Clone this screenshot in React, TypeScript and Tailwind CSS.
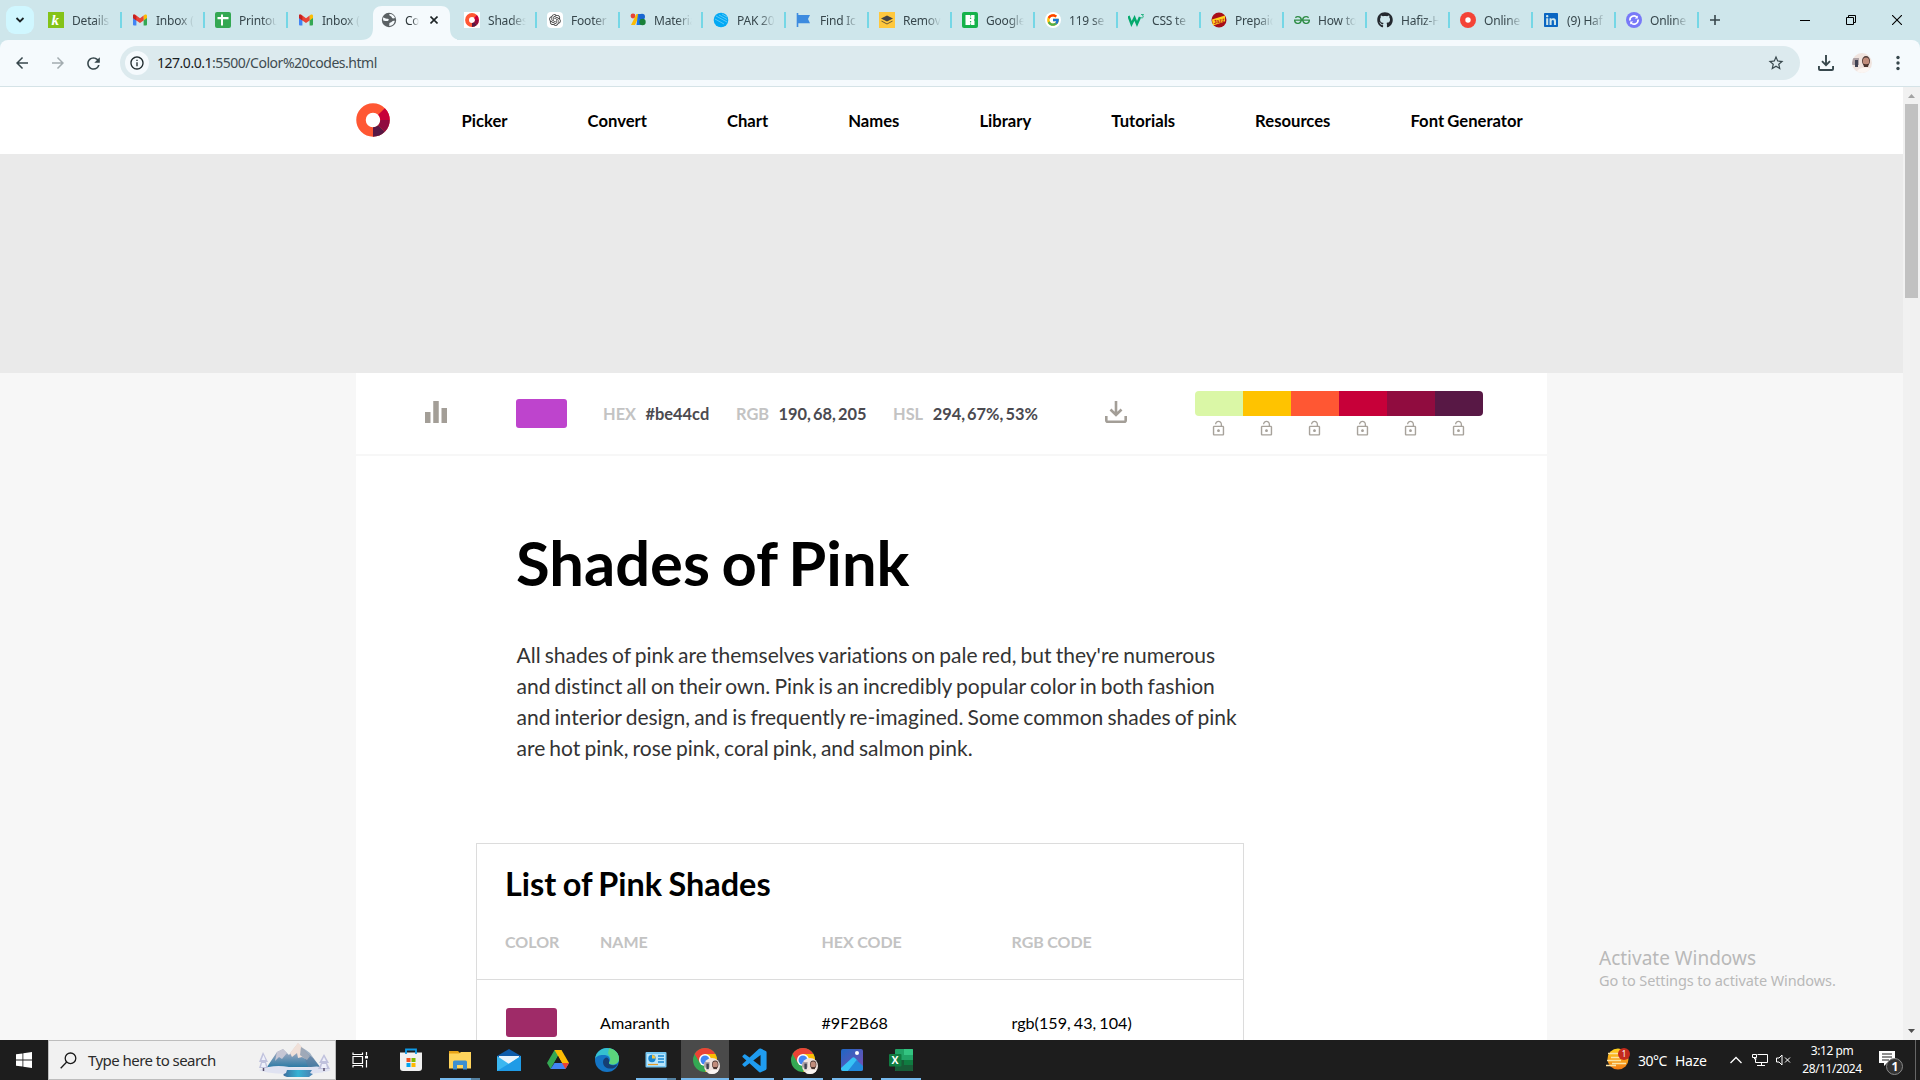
import React from "react";
import { FcGoogle } from "react-icons/fc";
import { SiGeeksforgeeks } from "react-icons/si";
import { RiOpenaiFill } from "react-icons/ri";
import { FaGithub, FaLinkedin } from "react-icons/fa";
import { BiLogoVisualStudio } from "react-icons/bi";
import { MdLockOpen, MdStarBorder, MdInfoOutline, MdArrowBack, MdArrowForward, MdRefresh } from "react-icons/md";

function Gmail() {
  return (
    <svg viewBox="0 0 16 16" className="h-4 w-4">
      <path d="M1 4v8.500a1 1 0 0 0 1 1h2.400V6.500z" fill="#4285f4" />
      <path d="M15 4v8.500a1 1 0 0 1-1 1h-2.400V6.500z" fill="#34a853" />
      <path d="M11.600 3.500 13 2.600c1-.6 2 .1 2 1.200V6l-3.400 2.500z" fill="#fbbc04" />
      <path d="M1 6V3.800c0-1.100 1-1.800 2-1.200l5 3.700 3.600-2.800v5L8 11 4.400 8.500z" fill="#ea4335" />
      <path d="M1 6V3.800C1 3 1.500 2.500 2.200 2.500L4.400 4v4.500z" fill="#c5221f" />
    </svg>
  );
}

function Ring({ className }: { className: string }) {
  return (
    <svg viewBox="0 0 34 34" className={className}>
      <circle cx="17" cy="17" r="12" fill="none" stroke="#ff5733" strokeWidth="9.500" />
      <g fill="none" strokeWidth="9.500">
        <path d="M25.500 8.500A12 12 0 0 1 29 17" stroke="#c70039" />
        <path d="M29 17A12 12 0 0 1 25.500 25.500" stroke="#900c3f" />
        <path d="M25.500 25.500A12 12 0 0 1 17 29" stroke="#581845" />
      </g>
    </svg>
  );
}

const svg16 = (children: React.ReactNode) => (
  <svg viewBox="0 0 16 16" className="h-4 w-4">{children}</svg>
);

const globe = svg16(
  <>
    <circle cx="8" cy="8" r="7.200" fill="#5b6164" />
    <path d="M2 5.500c2 .2 2.500 1.500 4.500 1.200 1.600-.2 1.500 1.300.6 2-1 .8-2.600.2-4.900-.3zM8.500 2c-.8 1 .2 1.900 1.300 2.200 1.300.3.700 2 2.200 2.200 1 .1 1.800-.4 2-.4-.6-2.300-2.700-4.200-5.500-4zM13.800 8.800c-1.600 0-2.300.2-3 1-.8.900-2 .5-2.400 1.500-.3.900.3 1.700-.3 2.700 3 .2 5.300-2 5.700-5.200z" fill="#f5fafd" />
  </>
);

interface TabData { title: string; icon: React.ReactNode; active?: boolean; sep?: boolean }

const tabs: TabData[] = [
  { title: "Details", icon: svg16(<><rect width="16" height="16" fill="#84c318" /><text x="3.500" y="13" fontSize="15" fontStyle="italic" fontWeight="bold" fontFamily="Liberation Serif, serif" fill="#fff">k</text></>) },
  { title: "Inbox (", icon: <Gmail />, sep: true },
  { title: "Printou", icon: svg16(<><rect width="16" height="16" rx="2" fill="#34a853" /><path d="M6 2.500h2v11H6zM2.500 5h11v2.200h-11z" fill="#fff" /></>), sep: true },
  { title: "Inbox (", icon: <Gmail />, sep: true },
  { title: "Co", icon: globe, active: true },
  { title: "Shades", icon: <div className="bg-white"><Ring className="h-4 w-4 p-px" /></div> },
  { title: "Footer", icon: <div className="flex h-4 w-4 items-center justify-center rounded-sm bg-white"><RiOpenaiFill size={14} color="#333" /></div>, sep: true },
  { title: "Materia", icon: svg16(<><circle cx="3" cy="4" r="2.400" fill="#ea4335" /><path d="M6.500 2H10L5 13H1z" fill="#fbbc04" /><path d="M8 2h3v11H6.500z" fill="#1a73e8" /><circle cx="12" cy="4.800" r="3" fill="#1967d2" /><circle cx="12.500" cy="10" r="3.200" fill="#188038" /></>), sep: true },
  { title: "PAK 20", icon: svg16(<><circle cx="8" cy="8" r="7.300" fill="#03a9f4" /><path d="m3 4 11 6M6 3l8 4.500M9 2l5 3M2 7l9 5" stroke="#6fd0fa" strokeWidth=".8" /></>), sep: true },
  { title: "Find Ic", icon: svg16(<><path d="M1.500 1v14" stroke="#3d8bdf" strokeWidth="1.600" /><path d="M1.500 3H14l-2 4 2 4.200H1.500z" fill="#3d8bdf" /></>), sep: true },
  { title: "Remov", icon: svg16(<><rect width="16" height="16" fill="#ffc83d" /><path d="m8 3.500 6 3-6 3-6-3z" fill="#454545" /><path d="m2.500 8.500 5.500 3 5.500-3v1L8 12.500l-5.500-3z" fill="#6b5a35" /></>), sep: true },
  { title: "Google", icon: svg16(<><rect width="16" height="16" rx="2" fill="#16b24b" /><path d="M3.500 3h9v4l-.7 1 .7 1v4h-9z" fill="#fff" /><path d="M8.600 3v1.500M8.600 11.500V13" stroke="#16b24b" strokeWidth=".8" /><circle cx="8.600" cy="6.300" r=".7" fill="#16b24b" /><circle cx="8.600" cy="9.700" r=".7" fill="#16b24b" /></>), sep: true },
  { title: "119 se", icon: <div className="flex h-4 w-4 items-center justify-center rounded-full bg-white"><FcGoogle size={14} /></div>, sep: true },
  { title: "CSS te", icon: svg16(<><path d="m.5 4 3 8 3-6 2.500 6 3-7" fill="none" stroke="#04aa6d" strokeWidth="2.400" /><path d="M13 2.500h2.500L14.500 4c1.500.3 1 2.300-1.500 1.800" fill="none" stroke="#04aa6d" strokeWidth=".8" /></>), sep: true },
  { title: "Prepaid", icon: svg16(<><circle cx="8" cy="8" r="7.500" fill="#a80f19" /><path d="m1 7.500 13-4v6L2 13.500z" fill="#ffd21c" /><text x="2" y="11" fontSize="5.500" fontWeight="bold" fontStyle="italic" transform="rotate(-14 7 9)" fontFamily="Liberation Sans, sans-serif" fill="#b7121c">Jazz</text></>), sep: true },
  { title: "How to", icon: <SiGeeksforgeeks size={16} color="#2f8d46" />, sep: true },
  { title: "Hafiz-H", icon: <FaGithub size={16} color="#24292f" />, sep: true },
  { title: "Online", icon: svg16(<><circle cx="8" cy="8" r="8" fill="#f44336" /><circle cx="8" cy="8" r="2.700" fill="#fff" /></>), sep: true },
  { title: "(9) Haf", icon: <FaLinkedin size={16} color="#0a66c2" />, sep: true },
  { title: "Online", icon: svg16(<><circle cx="8" cy="8" r="8" fill="#7879f8" /><path d="M4 8.500A4 4 0 0 1 11 5.300M12 7.500a4 4 0 0 1-7 3.200" fill="none" stroke="#fff" strokeWidth="1.700" /><path d="M11.800 3.500v3h-3zM4.200 12.500v-3h3z" fill="#fff" /></>), sep: true },
];

function Tab({ t, first }: { t: TabData; first: boolean }) {
  if (t.active) {
    return (
      <div className="relative h-10 w-[83px] shrink-0">
        <svg viewBox="0 0 97 34" className="absolute -left-[9px] top-[6px] h-[34px] w-[97px]">
          <path d="M1 34c8 0 12-4 12-12V9c0-6 4-9 9-9h59c5 0 9 3 9 9v13c0 8 4 12 12 12z" fill="#f5fafd" />
        </svg>
        <div className="relative flex h-10 items-center pl-3">
          {t.icon}
          <span className="ml-2 w-[14px] whitespace-nowrap pt-px text-[12px] tracking-[-0.3px] text-[#2d3639] [mask-image:linear-gradient(to_right,black_50%,transparent)]">{t.title}</span>
          <svg viewBox="0 0 8 8" className="ml-[11px] h-2 w-2"><path d="m.5.5 7 7m0-7-7 7" stroke="#1d2426" strokeWidth="1.600" /></svg>
        </div>
      </div>
    );
  }
  return (
    <div className={first ? "flex h-10 w-[84px] shrink-0 items-center" : "flex h-10 w-[83px] shrink-0 items-center"}>
      <div className={t.sep ? "h-4 w-0.5 shrink-0 bg-[#75d7e6]" : "h-4 w-0.5 shrink-0"} />
      <div className="ml-2.5 h-4 w-4 shrink-0">{t.icon}</div>
      <span className="ml-2 w-[38px] whitespace-nowrap pt-[2px] text-[12px] tracking-[-0.2px] text-[#37474c] [mask-image:linear-gradient(to_right,black_60%,transparent)]">{t.title}</span>
    </div>
  );
}

function Avatar({ className }: { className: string }) {
  return (
    <svg viewBox="0 0 20 20" className={className}>
      <defs><clipPath id="av"><circle cx="10" cy="10" r="10" /></clipPath></defs>
      <g clipPath="url(#av)">
        <rect width="20" height="20" fill="#f0e4df" />
        <rect y="5" width="7" height="7" fill="#b0a3a6" />
        <rect x="3" y="7" width="3" height="7" fill="#3f4152" />
        <ellipse cx="14" cy="8" rx="4" ry="5" fill="#4f3a35" />
        <ellipse cx="14" cy="8.500" rx="3.200" ry="4" fill="#c08c7b" />
        <path d="M11 10.500c1.500 1 4.500 1 6 0l-1 3.500h-4z" fill="#4a342e" />
        <path d="M4 20c1-6 15-8 16-2v2z" fill="#fbf6f3" />
      </g>
    </svg>
  );
}

function DownloadIcon({ className, color }: { className: string; color: string }) {
  return (
    <svg viewBox="0 0 22 22" className={className} fill="none" stroke={color} strokeWidth="2.600">
      <path d="M11 0v14M5.500 8.500 11 14l5.500-5.500M1.300 15v4.200c0 .9.600 1.500 1.500 1.500h16.400c.9 0 1.500-.6 1.500-1.500V15" />
    </svg>
  );
}

function Browser() {
  return (
    <div className="font-['Noto_Sans',sans-serif]">
      <div className="flex h-10 items-center bg-[#cee6eb]">
        <div className="ml-1.5 flex h-7 w-7 shrink-0 items-center justify-center rounded-[9px] bg-[#d0f7ff]">
          <svg viewBox="0 0 10 10" className="h-2.5 w-2.5"><path d="m1.500 3 3.500 3.500L8.500 3" fill="none" stroke="#1c2527" strokeWidth="1.800" /></svg>
        </div>
        <div className="ml-0.5 flex">
          {tabs.map((t, i) => <Tab key={i} t={t} first={i === 0} />)}
        </div>
        <div className="h-4 w-0.5 bg-[#75d7e6]" />
        <svg viewBox="0 0 10 10" className="ml-[11px] h-2.5 w-2.5"><path d="M5 0v10M0 5h10" stroke="#37474c" strokeWidth="1.600" /></svg>
        <div className="ml-auto flex items-center gap-9 pr-[18px]">
          <svg viewBox="0 0 10 10" className="h-2.5 w-2.5"><path d="M0 5.500h10" stroke="#000" /></svg>
          <svg viewBox="0 0 10 10" className="h-2.5 w-2.5"><path d="M.5 2.500h7v7h-7zM2.500 2.500v-2h7v7h-2" fill="none" stroke="#000" /></svg>
          <svg viewBox="0 0 10 10" className="h-2.5 w-2.5"><path d="m0 0 10 10M10 0 0 10" stroke="#000" strokeWidth="1.100" /></svg>
        </div>
      </div>
      <div className="bg-[#cee6eb]">
        <div className="flex h-[47px] items-center rounded-t-lg border-b border-[#d5e3e7] bg-[#f5fafd] text-[#37474c]">
          <MdArrowBack size={18} className="ml-[13px]" />
          <MdArrowForward size={18} className="ml-[18px] text-[#a3acb0]" />
          <MdRefresh size={19} className="ml-[17px]" />
          <div className="ml-[17px] flex h-[34px] w-[1680px] items-center rounded-full bg-[#dceaee] pl-[5px] pr-[15px]">
            <div className="flex h-6 w-6 items-center justify-center rounded-full bg-[#f5fafd] text-[#1f2a2d]"><MdInfoOutline size={16} /></div>
            <span className="ml-2 pb-px text-[14px] tracking-[-0.48px] text-[#3f4c51]"><span className="text-[#1a2023]">127.0.0.1</span>:5500/Color%20codes.html</span>
            <MdStarBorder size={18} className="ml-auto" />
          </div>
          <DownloadIcon className="ml-[18px] h-4 w-4" color="#37474c" />
          <Avatar className="ml-[18px] h-5 w-5" />
          <svg viewBox="0 0 4 16" className="ml-6 h-4 w-1" fill="#37474c"><circle cx="2" cy="2.500" r="1.700" /><circle cx="2" cy="8" r="1.700" /><circle cx="2" cy="13.500" r="1.700" /></svg>
        </div>
      </div>
    </div>
  );
}

const nav = ["Picker", "Convert", "Chart", "Names", "Library", "Tutorials", "Resources", "Font Generator"];

function Palette() {
  return (
    <div className="ml-[68px] mt-[18px] w-72">
      <div className="flex h-[25px] overflow-hidden rounded">
        <div className="w-12 bg-[#daf7a6]" />
        <div className="w-12 bg-[#ffc300]" />
        <div className="w-12 bg-[#ff5733]" />
        <div className="w-12 bg-[#c70039]" />
        <div className="w-12 bg-[#900c3f]" />
        <div className="w-12 bg-[#581845]" />
      </div>
      <div className="mt-1 flex">
        {[0, 1, 2, 3, 4, 5].map((n) => <div key={n} className="flex w-12 justify-center pr-px"><MdLockOpen size={17} color="#a7a29b" /></div>)}
      </div>
    </div>
  );
}

function Code({ label, value, className }: { label: string; value: string; className: string }) {
  return (
    <div className={className}>
      <span className="text-[#c3c3c3]">{label}</span>
      <span className="ml-[9.500px] text-[#4b4a50] [word-spacing:-1.900px]">{value}</span>
    </div>
  );
}

function Page() {
  return (
    <div className="h-[953px] w-[1903px] overflow-hidden bg-[#f7f7f7] font-[Lato,sans-serif] [font-variant-ligatures:none]">
      <header className="flex h-[67px] items-center bg-white pl-[356px]">
        <Ring className="h-[34px] w-[34px] -translate-y-px" />
        <nav className="ml-[71.500px] flex gap-20 pt-px text-[16.650px] font-bold text-black [word-spacing:-0.900px]">
          {nav.map((n) => <a key={n} className="whitespace-nowrap">{n}</a>)}
        </nav>
      </header>
      <div className="h-[219px] bg-[#eaeaea]" />
      <main className="ml-[356px] h-[700px] w-[1191px] bg-white">
        <div className="flex h-[83px] border-b-2 border-[#f7f7f7]">
          <svg viewBox="4 4 16 16" className="ml-[69px] mt-7 h-[22px] w-[22px]"><path d="M10 20h4V4h-4zM4 20h4v-8H4zM16 9v11h4V9z" fill="#a39e97" /></svg>
          <div className="ml-[69px] mt-[26px] h-[29px] w-[51px] rounded-[3px] bg-[#be44cd]" />
          <div className="mt-[29px] flex w-[538px] pl-9 text-[16.400px] font-bold">
            <Code label="HEX" value="#be44cd" className="w-[133px]" />
            <Code label="RGB" value="190, 68, 205" className="w-[157px]" />
            <Code label="HSL" value="294, 67%, 53%" className="" />
          </div>
          <DownloadIcon className="mt-7 h-[22px] w-[22px]" color="#a39e97" />
          <Palette />
        </div>
        <div className="ml-[160px]">
          <h1 className="mt-[68px] text-[61.500px] font-bold leading-[76px] text-black [word-spacing:-3.500px]">Shades of Pink</h1>
          <p className="ml-[0.500px] mt-[39px] whitespace-nowrap text-[21px] leading-[31px] text-[#333] [word-spacing:-1.250px]">
            All shades of pink are themselves variations on pale red, but they're numerous<br />
            and distinct all on their own. Pink is an incredibly popular color in both fashion<br />
            and interior design, and is frequently re-imagined. Some common shades of pink<br />
            are hot pink, rose pink, coral pink, and salmon pink.
          </p>
        </div>
        <section className="ml-[120px] mt-20 h-[300px] w-[768px] border border-[#dcdcdc] text-black">
          <h2 className="ml-7 mt-5 text-[32.400px] font-bold leading-10 [word-spacing:-1.500px]">List of Pink Shades</h2>
          <div className="mt-[26px] flex h-[50px] border-b border-[#dcdcdc] pl-7 text-[16px] font-bold leading-6 text-[#c3c3c3] [word-spacing:-0.500px]">
            <span className="w-[95px]">COLOR</span>
            <span className="w-[221.500px]">NAME</span>
            <span className="w-[190px]">HEX CODE</span>
            <span>RGB CODE</span>
          </div>
          <div className="flex h-[85px] items-center pl-[29px] text-[16.150px] [word-spacing:-1px]">
            <div className="w-[94px]"><div className="h-[29px] w-[51px] rounded-[3px] bg-[#9f2b68]" /></div>
            <span className="w-[221.500px] pt-px">Amaranth</span>
            <span className="w-[190px] pt-px">#9F2B68</span>
            <span className="pt-px">rgb(159, 43, 104)</span>
          </div>
        </section>
      </main>
    </div>
  );
}

function Scrollbar() {
  return (
    <div className="flex h-[953px] w-[17px] flex-col items-center justify-between bg-[#f1f1f1]">
      <div className="flex flex-col items-center">
        <svg viewBox="0 0 17 17" className="h-[17px] w-[17px]"><path d="M5 11h7L8.500 7z" fill="#a3a3a3" /></svg>
        <div className="h-[194px] w-[13px] bg-[#c1c1c1]" />
      </div>
      <svg viewBox="0 0 17 17" className="h-[17px] w-[17px]"><path d="M5 6h7l-3.500 4z" fill="#505050" /></svg>
    </div>
  );
}

function Chrome() {
  return (
    <div className="relative h-6 w-6">
      <svg viewBox="0 0 24 24" className="h-6 w-6">
        <circle cx="12" cy="12" r="12" fill="#34a853" />
        <path d="M12 6h10.400A12 12 0 0 1 12 24l5-9z" fill="#fbbc04" />
        <path d="M1.600 6A12 12 0 0 1 22.400 6H12l-5 9z" fill="#ea4335" />
        <circle cx="12" cy="12" r="6" fill="#fff" />
        <circle cx="12" cy="12" r="4.500" fill="#4285f4" />
      </svg>
      <Avatar className="absolute left-[11px] top-[10px] h-4 w-4" />
    </div>
  );
}

const s24 = (children: React.ReactNode) => <svg viewBox="0 0 24 24" className="h-6 w-6">{children}</svg>;

const apps: { icon: React.ReactNode; mode?: string }[] = [
  { icon: s24(<><path d="M1 4.500h22V20a3 3 0 0 1-3 3H4a3 3 0 0 1-3-3z" fill="#f0f0f0" /><path d="M7 6V1.500h10V6" fill="none" stroke="#0f9be8" strokeWidth="1.800" /><path d="M7.500 10h4v4h-4z" fill="#f25022" /><path d="M12.500 10h4v4h-4z" fill="#7fba00" /><path d="M7.500 15h4v4h-4z" fill="#00a4ef" /><path d="M12.500 15h4v4h-4z" fill="#ffb900" /></>) },
  { icon: s24(<><path d="M1 3h9l2 2v6H1z" fill="#e8a317" /><path d="M1 5.500h10L13 4h10v16.500H1z" fill="#ffd45c" /><path d="M5 21.500V14a1.500 1.500 0 0 1 1.500-1.500h11A1.500 1.500 0 0 1 19 14v7.500h-4V17H9v4.500z" fill="#3d8fd1" /></>), mode: "multi" },
  { icon: s24(<><path d="m0 8 12-7 12 7v5H0z" fill="#0f5ba8" /><path d="M2 8h20v8H2z" fill="#e9f3fb" /><path d="M0 8v15h24V8l-12 8z" fill="#3bb7f0" /><path d="M0 23 24 8v15z" fill="#1f9be6" /></>) },
  { icon: s24(<><path d="M8.500 2h7l-7.500 13-3.500 6L1 15z" fill="#34a853" /><path d="M8.500 2h7L23 15h-7z" fill="#fbbc04" /><path d="M8.500 15H23l-3.500 6h-15z" fill="#4285f4" /><path d="M16 15h7l-3.500 6z" fill="#ea4335" /><path d="m12 8 3.700 7H8.300z" fill="#1d1d1d" /></>) },
  { icon: s24(<><circle cx="12" cy="12" r="12" fill="#1474c4" /><path d="M0 11C1 4 6 0 12 0c7 0 12 5 12 10.500 0 4-3 6-6.500 6-3 0-4-1-3.500-2 2-2 1-7-4-7.500C5 6.500 1 8 0 11z" fill="#35c1d0" /><path d="M14 .2C20 1 24 5.500 24 10.500c0 4-3 6-6.500 6-3 0-4-1-3.500-2 2-2 2-6-1-9z" fill="#5bd67c" /><path d="M8 14c0-3 2-4.500 4-4.500 2 1 2.500 3.500 2 5-.5 2.500 3.500 4 8.500 1.700C21 20 17 21 14 20.500c-4-.5-6-3.500-6-6.500z" fill="#163f74" /></>) },
  { icon: s24(<><rect x="1.500" y="4" width="21" height="15.500" rx="1" fill="#76c7f2" /><rect x="3" y="6" width="18" height="12" fill="#b9e5fb" /><circle cx="8" cy="10.500" r="3.700" fill="#1986d1" /><path d="M8 10.500V7a3.500 3.500 0 0 1 3.500 3.500z" fill="#f5c443" /><path d="M14 8h6m-6 3h6m-6 3h6" stroke="#1986d1" strokeWidth="1.500" /><path d="M4 16.500h10" stroke="#e59d28" strokeWidth="1.200" /></>), mode: "multi" },
  { icon: <Chrome />, mode: "active" },
  { icon: <BiLogoVisualStudio size={29} color="#1f9cf0" />, mode: "open" },
  { icon: <Chrome />, mode: "open" },
  { icon: s24(<><defs><linearGradient id="ph" x1="0" x2="1" y2="1"><stop stopColor="#1d67c5" /><stop offset="1" stopColor="#7c4eb2" /></linearGradient></defs><rect x="1" y="1" width="22" height="22" rx="2" fill="url(#ph)" /><path d="m1 20 11-10c1-1 2-1 3 0l2.500 2.500L8 23H3a2 2 0 0 1-2-2z" fill="#37c3f5" /><path d="m16.500 12 6.500 6v3a2 2 0 0 1-2 2H8z" fill="#2389db" /><circle cx="17" cy="5" r="2" fill="#fff" /></>), mode: "open" },
  { icon: s24(<><rect x="6" y="1" width="18" height="22" rx="1" fill="#21a366" /><path d="M15 1h8a1 1 0 0 1 1 1v5h-9z" fill="#33c481" /><path d="M15 12h9v5h-9z" fill="#107c41" /><path d="M6 12h9v11H7a1 1 0 0 1-1-1zM15 17h9v5a1 1 0 0 1-1 1h-8z" fill="#185c37" /><rect y="6" width="12.500" height="12.500" rx="1" fill="#107c41" /><text x="2.500" y="16" fontSize="10.500" fontWeight="bold" fontFamily="Open Sans, sans-serif" fill="#fff">X</text></>), mode: "open" },
];

function AppButton({ icon, mode }: { icon: React.ReactNode; mode?: string }) {
  const active = mode === "active";
  return (
    <div className={active ? "mr-px flex h-10 w-12 flex-col items-center bg-[#4a4a4a]" : "mr-px flex h-10 w-12 flex-col items-center"}>
      <div className="flex h-[38px] items-center justify-center pt-0.5">{icon}</div>
      {mode === "multi" && <div className="flex h-0.5 w-10"><div className="w-[31px] bg-[#76b9ed]" /><div className="w-[9px] bg-[#54809f]" /></div>}
      {mode === "open" && <div className="h-0.5 w-10 bg-[#76b9ed]" />}
      {active && <div className="h-0.5 w-12 bg-[#76b9ed]" />}
    </div>
  );
}

function SearchArt() {
  return (
    <svg viewBox="0 0 72 36" className="h-9 w-[72px]">
      <defs>
        <linearGradient id="mt" x1="0" x2="0" y2="1"><stop stopColor="#e3d3d2" /><stop offset=".5" stopColor="#8aa0bb" /><stop offset="1" stopColor="#2e7ba6" /></linearGradient>
        <linearGradient id="lk" x1="0" x2="1"><stop stopColor="#3d6b9c" /><stop offset=".5" stopColor="#37b2d3" /><stop offset="1" stopColor="#4a7eb0" /></linearGradient>
      </defs>
      <path d="m8 25 10-15 6-3 6 6 9-12 10 11 5 4 7 9z" fill="url(#mt)" />
      <path d="m39 1-8 10 2 4 5-4 1 5 4-1 5 3 3-4z" fill="#f0e0d8" />
      <path d="m42 5-1 8 5 4 3 8h12l-8-11-2-3-4-3z" fill="#5d7c9f" opacity=".55" />
      <path d="m18 10 6-3 4 4-5 6-3-2-4 4z" fill="#c6c6d4" />
      <path d="M0 28q14-6 30-3 12 1 22 0 10-2 20 3-8 4-36 4-28 0-36-4z" fill="#dfe2f1" />
      <path d="M28 28h25l-2 3 3 1-4 3H28q-7-2-1-4z" fill="url(#lk)" />
      <path d="M4 10 0 20h2l-2 6h9l-2-6h2zM65 12l-5 9h2l-3 6h12l-3-6h2z" fill="#c0c2dd" />
      <path d="m4.500 13-2 5h4zM65 15l-2 4h4zM3 21h3l1 4H2zM63 22h4l1 4h-6z" fill="#eef0fa" />
      <path d="M4.500 26v3M65 26v3" stroke="#5a4f6b" strokeWidth="1.500" />
    </svg>
  );
}

function Taskbar() {
  return (
    <div className="flex h-10 w-[1920px] items-center bg-[#1d1d1d] font-['Noto_Sans',sans-serif] text-white">
      <div className="flex w-12 justify-center">
        <svg viewBox="0 0 16 16" className="h-4 w-4" fill="#fff"><path d="M0 2.300 6.500 1.400v6.200H0zM7.300 1.300 16 0v7.600H7.300zM0 8.400h6.500v6.200L0 13.700zM7.300 8.400H16V16l-8.700-1.300z" /></svg>
      </div>
      <div className="flex h-10 w-72 items-center border border-[#bdbdbd] bg-[#f1f1f1] pl-[11px] text-[#2b2b2b]">
        <svg viewBox="0 0 17 17" className="h-[17px] w-[17px]" fill="none" stroke="#1a1a1a" strokeWidth="1.300"><circle cx="10.500" cy="6.300" r="5.300" /><path d="m6.700 10-6 6.300" /></svg>
        <span className="ml-[11px] text-[15px] tracking-[-0.550px]">Type here to search</span>
        <div className="ml-auto pr-1"><SearchArt /></div>
      </div>
      <div className="flex w-[51px] items-center pl-4">
        <svg viewBox="0 0 16 16" className="h-4 w-4" fill="none" stroke="#fff" strokeWidth="1.200"><path d="M1 4.500h9.500v7H1zM1 .5v2h9.500v-2M1 15.500v-2h9.500v2M14.500 0v3.500M14.500 8v7.500" /><path d="M13 4h3v2.500h-3z" fill="#fff" stroke="none" /></svg>
      </div>
      {apps.map((a, i) => <AppButton key={i} icon={a.icon} mode={a.mode} />)}
      <div className="ml-auto flex h-10 items-center">
        <div className="mr-px h-6 w-6 -translate-y-px">
          <svg viewBox="0 0 24 24" className="h-6 w-6">
            <defs><linearGradient id="hz" x1="0" x2="0" y2="1"><stop stopColor="#ffd21f" /><stop offset="1" stopColor="#f27a14" /></linearGradient></defs>
            <circle cx="12" cy="12" r="10.500" fill="url(#hz)" />
            <path d="M2 6.500h10M5 10.500h13M1 13.500h14M6 16.500h14M0 18.500h10" stroke="#fbe3a4" strokeWidth="1.500" />
            <circle cx="18" cy="7" r="6" fill="#c42b1c" />
            <text x="15.800" y="10" fontSize="8" fill="#fff" fontFamily="Noto Sans, sans-serif">1</text>
          </svg>
        </div>
        <span className="ml-[7px] w-[37px] whitespace-nowrap text-[14px] tracking-[-0.5px]">30°C</span>
        <span className="w-[47px] text-[14px] tracking-[-0.3px]">Haze</span>
        <svg viewBox="0 0 12 8" className="ml-2 h-2 w-3"><path d="m.5 7 5.500-5.500L11.500 7" fill="none" stroke="#fff" strokeWidth="1.300" /></svg>
        <svg viewBox="0 0 16 14" className="ml-2.5 h-3.5 w-4" fill="none" stroke="#fff"><path d="M5.500 1.500h10v8h-12v-4M9.500 9.500v3M5 12.500h8M.5 1.500h4v3h-4zM2.500 4.500v1.500h2" /></svg>
        <svg viewBox="0 0 15 12" className="ml-2 h-3 w-[15px]" fill="none" stroke="#fff"><path d="M.5 4v4H3l3 3V1L3 4zM9 3.500l5 5m0-5-5 5" /></svg>
        <div className="ml-[9px] w-[64px] text-center text-[12px] leading-[18px] tracking-[-0.450px]">
          <div>3:12 pm</div>
          <div>28/11/2024</div>
        </div>
        <div className="ml-[15px] mr-3 mt-1 h-[26px] w-6">
          <svg viewBox="0 0 24 26" className="h-[26px] w-6">
            <path d="M0 2h16v12h-8l-3 3v-3H0z" fill="#fff" />
            <path d="M3 5h10M3 8h10M3 11h7" stroke="#1d1d1d" />
            <circle cx="15.500" cy="17.500" r="8" fill="#333" stroke="#8a8a8a" />
            <text x="12.500" y="22" fontSize="12" fill="#fff" fontWeight="bold" fontFamily="Noto Sans, sans-serif">1</text>
          </svg>
        </div>
        <div className="h-10 w-[5px] border-l border-[#666]" />
      </div>
    </div>
  );
}

export default function App() {
  return (
    <div className="relative h-[1080px] w-[1920px] overflow-hidden">
      <Browser />
      <div className="flex">
        <Page />
        <Scrollbar />
      </div>
      <Taskbar />
      <div className="absolute left-[1599px] top-[945px] whitespace-nowrap font-['Noto_Sans',sans-serif] text-[#b9b9b9]">
        <div className="text-[19px] leading-[27px]">Activate Windows</div>
        <div className="text-[14.500px] leading-[17px] tracking-[-0.100px]">Go to Settings to activate Windows.</div>
      </div>
    </div>
  );
}
